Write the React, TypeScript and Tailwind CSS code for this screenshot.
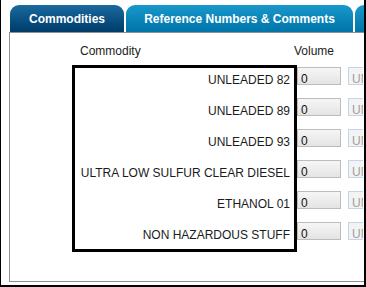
import React from "react";

const commodities = [
  "UNLEADED 82",
  "UNLEADED 89",
  "UNLEADED 93",
  "ULTRA LOW SULFUR CLEAR DIESEL",
  "ETHANOL 01",
  "NON HAZARDOUS STUFF",
];

export default function App() {
  return (
    <div className="w-[366px] h-[287px] overflow-hidden bg-white border-l border-r-2 border-b-2 border-black flex flex-col font-['Liberation_Sans',Arial,sans-serif] text-[12px] text-[#1b1b1b]">
      {/* Tabs */}
      <div className="h-[32px] shrink-0 pt-[5px] pl-[9px] flex gap-[2px]">
        <div className="w-[114px] shrink-0 rounded-t-[9px] bg-gradient-to-b from-[#1a6aa0] to-[#003c6a] text-white font-bold flex items-center justify-center pt-[1px]">
          Commodities
        </div>
        <div className="w-[227px] shrink-0 rounded-t-[9px] bg-gradient-to-b from-[#1898cb] to-[#0074a9] text-white font-bold flex items-center justify-center pt-[1px]">
          Reference Numbers &amp; Comments
        </div>
        <div className="w-[40px] shrink-0 rounded-t-[9px] bg-gradient-to-b from-[#1898cb] to-[#0074a9]" />
      </div>

      {/* Panel */}
      <div className="relative ml-[8px] w-[400px] h-[250px] shrink-0 border border-[#8f8f8f]">
        <div className="h-[34px] flex leading-[14px] pt-[11px]">
          <div className="w-[284px] pl-[70px] shrink-0">Commodity</div>
          <div>Volume</div>
        </div>

        {commodities.map((name) => (
          <div key={name} className="h-[31px] flex">
            <div className="w-[280px] shrink-0 text-right leading-[14px] pt-[6px] whitespace-nowrap">
              {name}
            </div>
            <div className="ml-[7px] w-[44px] h-[18px] shrink-0 border border-[#bcbcbc] bg-gradient-to-b from-[#f6f6f6] to-[#e4e4e4] pl-[3px] pt-[4px] leading-[14px] text-[#111] overflow-hidden">
              0
            </div>
            <div className="ml-[7px] w-[15px] h-[18px] shrink-0 border border-r-0 border-[#c6d4e6] bg-[#f3f3f3] pl-[3px] pt-[4px] leading-[14px] text-[#9d9d9d] whitespace-nowrap overflow-hidden">
              UN
            </div>
          </div>
        ))}

        {/* highlight box */}
        <div className="absolute left-[62px] top-[32px] w-[225px] h-[187px] border-[3px] border-black" />
      </div>
    </div>
  );
}
